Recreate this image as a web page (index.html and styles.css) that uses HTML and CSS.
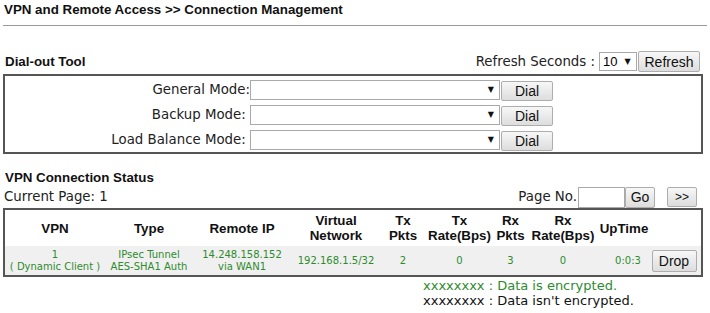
FILE: index.html
```html
<!DOCTYPE html>
<html>
<head>
<meta charset="utf-8">
<link rel="stylesheet" href="styles.css">
</head>
<body>
<div class="page">
  <div class="title">VPN and Remote Access &gt;&gt; Connection Management</div>

  <div class="toolbar">
    <div class="heading">Dial-out Tool</div>
    <div class="refresh">
      <span class="label">Refresh Seconds :</span>
      <div class="select select-small"><span class="val">10</span><span class="arrow">▼</span></div>
      <button class="btn btn-refresh">Refresh</button>
    </div>
  </div>

  <div class="dial-box">
    <div class="dial-row">
      <span class="dial-label">General Mode:</span>
      <div class="select select-wide"><span class="arrow">▼</span></div>
      <button class="btn btn-dial">Dial</button>
    </div>
    <div class="dial-row">
      <span class="dial-label">Backup Mode:&nbsp;</span>
      <div class="select select-wide"><span class="arrow">▼</span></div>
      <button class="btn btn-dial">Dial</button>
    </div>
    <div class="dial-row">
      <span class="dial-label">Load Balance Mode:&nbsp;</span>
      <div class="select select-wide"><span class="arrow">▼</span></div>
      <button class="btn btn-dial">Dial</button>
    </div>
  </div>

  <div class="heading heading-status">VPN Connection Status</div>
  <div class="pager">
    <span class="label">Current Page: 1</span>
    <div class="pager-right">
      <span class="label">Page No.</span>
      <input class="page-input" type="text">
      <button class="btn btn-go">Go</button>
      <button class="btn btn-next">&gt;&gt;</button>
    </div>
  </div>

  <table class="status">
    <colgroup>
      <col class="c-vpn"><col class="c-type"><col class="c-ip"><col class="c-net">
      <col class="c-txp"><col class="c-txr"><col class="c-rxp"><col class="c-rxr">
      <col class="c-up"><col class="c-act">
    </colgroup>
    <thead>
      <tr>
        <th>VPN</th>
        <th>Type</th>
        <th>Remote IP</th>
        <th>Virtual<br>Network</th>
        <th>Tx<br>Pkts</th>
        <th>Tx<br>Rate(Bps)</th>
        <th>Rx<br>Pkts</th>
        <th>Rx<br>Rate(Bps)</th>
        <th>UpTime</th>
        <th></th>
      </tr>
    </thead>
    <tbody>
      <tr class="data">
        <td>1<br>( Dynamic Client )</td>
        <td>IPsec Tunnel<br>AES-SHA1 Auth</td>
        <td>14.248.158.152<br>via WAN1</td>
        <td>192.168.1.5/32</td>
        <td>2</td>
        <td>0</td>
        <td>3</td>
        <td>0</td>
        <td class="up">0:0:3</td>
        <td><button class="btn btn-drop">Drop</button></td>
      </tr>
    </tbody>
  </table>

  <div class="legend">
    <div class="enc">xxxxxxxx : Data is encrypted.</div>
    <div class="plain">xxxxxxxx : Data isn't encrypted.</div>
  </div>
</div>
</body>
</html>
```

FILE: styles.css
```css
html, body {
  margin: 0;
  padding: 0;
  background: #fff;
}

.page {
  width: 704px;
  padding: 2px 3px 0 3px;
  color: #000;
  font-family: "DejaVu Sans", Verdana, sans-serif;
  font-size: 13px;
}

.title {
  font-family: "Liberation Sans", Arial, sans-serif;
  font-weight: bold;
  font-size: 13.33px;
  line-height: 16px;
  padding: 0 0 7px 1px;
  border-bottom: 1px solid #999;
  color: #111;
}

.heading {
  font-family: "Liberation Sans", Arial, sans-serif;
  font-weight: bold;
  font-size: 13.33px;
  line-height: 16px;
  padding-left: 2px;
  color: #111;
}

.toolbar {
  display: flex;
  justify-content: space-between;
  align-items: center;
  height: 21px;
  margin: 25px 7px 0 0;
}

.refresh {
  display: flex;
  align-items: center;
}

.label {
  font-family: "DejaVu Sans", Verdana, sans-serif;
  font-size: 13.33px;
  line-height: 16px;
  color: #222;
}

.refresh .label {
  margin-right: 4px;
}

.select {
  display: flex;
  align-items: center;
  box-sizing: border-box;
  border: 1px solid #a9a9a9;
  background: #fff;
}

.select .arrow {
  font-family: "DejaVu Sans", sans-serif;
  font-size: 8px;
  line-height: 8px;
  color: #111;
}

.select-small {
  width: 38px;
  height: 19px;
  padding-left: 3px;
  gap: 7px;
  font-family: "Liberation Sans", Arial, sans-serif;
  font-size: 13px;
}

.select-wide {
  width: 250px;
  height: 20px;
  justify-content: flex-end;
  padding-right: 5px;
}

.btn {
  box-sizing: border-box;
  font-family: "Liberation Sans", Arial, sans-serif;
  font-size: 13px;
  color: #111;
  background: linear-gradient(#f7f7f7, #dddddd);
  border: 1px solid #adadad;
  border-radius: 2px;
  padding: 0;
  margin: 0;
}

.btn-refresh {
  width: 62px;
  height: 21px;
  margin-left: 1px;
  font-size: 14px;
}

.dial-box {
  box-sizing: border-box;
  width: 700px;
  margin-top: 2px;
  border: 2px solid #555;
  padding-top: 1px;
}

.dial-row {
  display: flex;
  align-items: center;
  height: 25px;
}

.dial-label {
  width: 245px;
  text-align: right;
  font-size: 13.33px;
  color: #222;
  white-space: nowrap;
}

.btn-dial {
  width: 52px;
  height: 20px;
  margin-left: 1px;
  margin-top: 2px;
  font-size: 14px;
}

.heading-status {
  margin-top: 16px;
}

.pager {
  display: flex;
  justify-content: space-between;
  align-items: center;
  height: 22px;
  margin-right: 10px;
  padding-left: 1px;
}

.pager-right {
  display: flex;
  align-items: center;
}

.page-input {
  box-sizing: border-box;
  width: 47px;
  height: 21px;
  margin: 0 0 0 1px;
  border: 1px solid #a9a9a9;
  padding: 0;
}

.btn-go {
  width: 30px;
  height: 21px;
  font-size: 14px;
}

.btn-next {
  width: 30px;
  height: 20px;
  margin-left: 12px;
  font-size: 12px;
}

.status {
  width: 700px;
  table-layout: fixed;
  border-collapse: separate;
  border-spacing: 0;
  border: 2px solid #555;
}

.c-vpn { width: 100px; }
.c-type { width: 88px; }
.c-ip { width: 98px; }
.c-net { width: 90px; }
.c-txp { width: 44px; }
.c-txr { width: 69px; }
.c-rxp { width: 33px; }
.c-rxr { width: 72px; }
.c-up { width: 50px; }
.c-act { width: 52px; }

.status th {
  height: 36px;
  padding: 0;
  font-family: "Liberation Sans", Arial, sans-serif;
  font-weight: bold;
  font-size: 13.33px;
  line-height: 15px;
  text-align: center;
  vertical-align: middle;
  color: #111;
  white-space: nowrap;
}

.status td {
  height: 29px;
  padding: 0;
  background: #f0f0f0;
  font-family: "DejaVu Sans", Verdana, sans-serif;
  font-size: 10px;
  line-height: 12px;
  color: #2e8b2e;
  text-align: center;
  vertical-align: middle;
  white-space: nowrap;
}

.status td.up {
  padding-left: 8px;
}

.btn-drop {
  width: 45px;
  height: 22px;
  font-size: 14px;
  margin-left: -2px;
}

.legend {
  margin: 1px 0 0 420px;
  font-size: 13px;
  line-height: 15px;
}

.enc {
  color: #2e8b2e;
}

.plain {
  color: #111;
}
```
